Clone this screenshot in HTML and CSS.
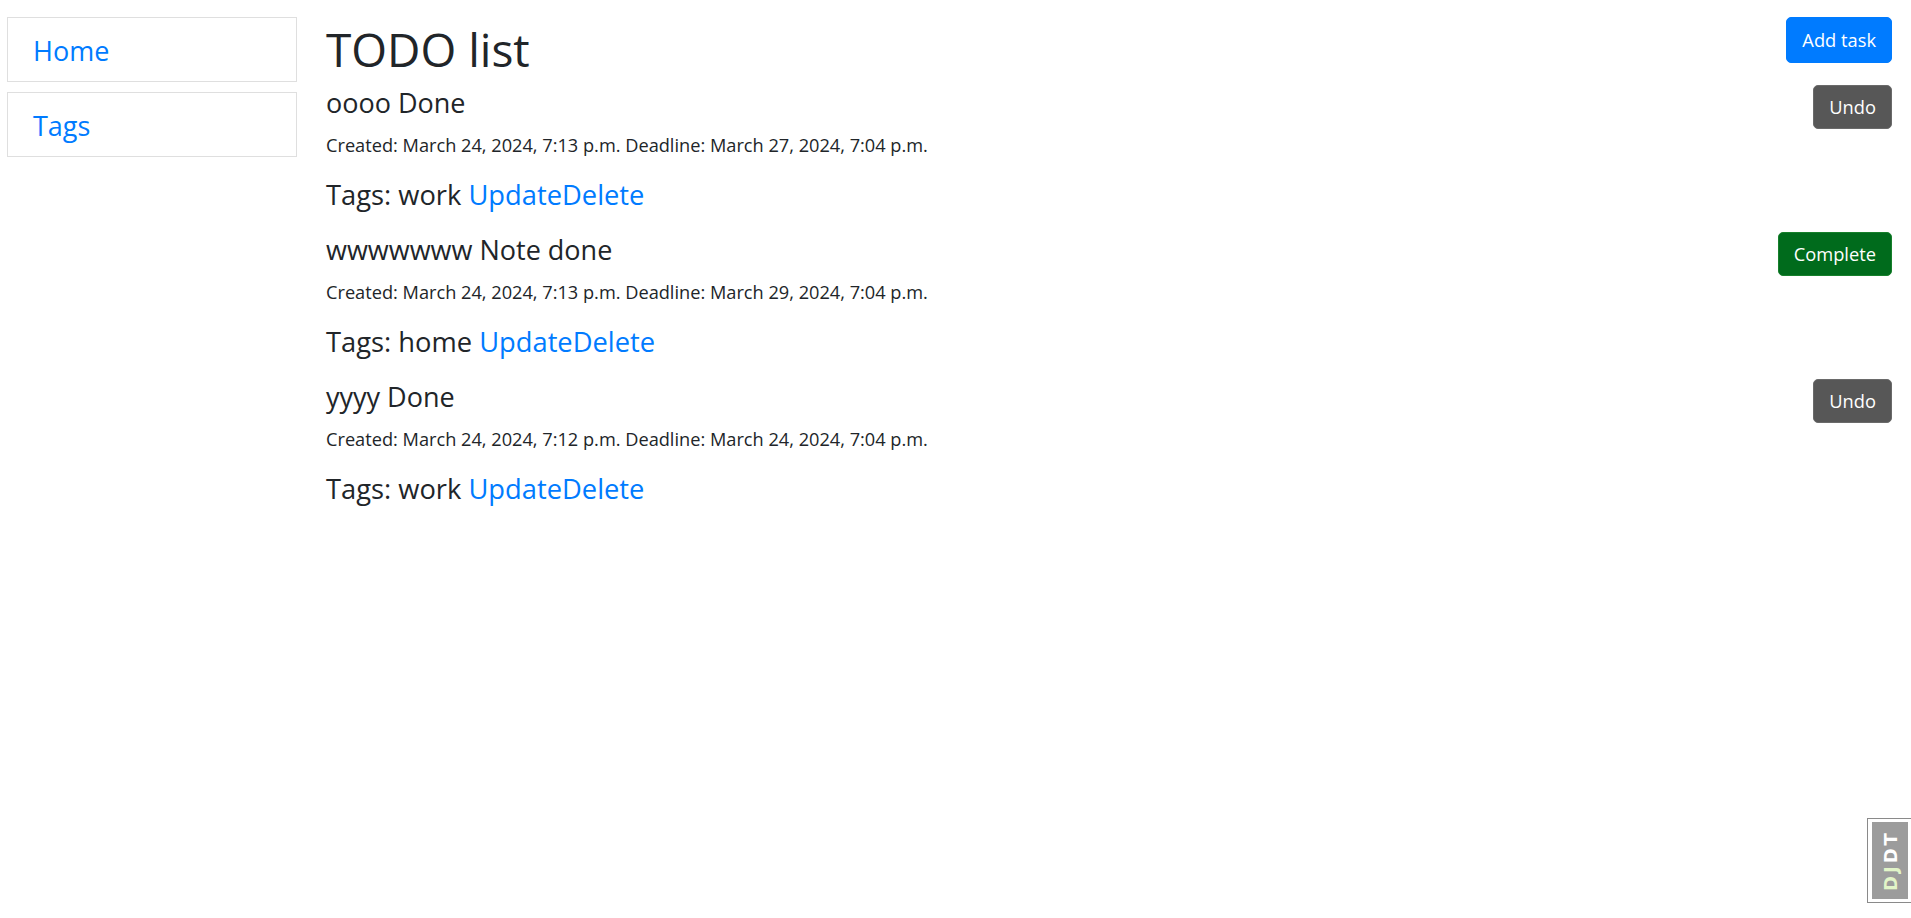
FILE: index.html
```html
<!DOCTYPE html>
<html lang="en">
<head>
<meta charset="utf-8">
<title>TODO list</title>
<link rel="stylesheet" href="styles.css">
</head>
<body>
<div class="layout">
  <aside class="sidebar">
    <a class="nav-item" href="#">Home</a>
    <a class="nav-item" href="#">Tags</a>
  </aside>
  <main class="content">
    <div class="header">
      <h1 class="page-title">TODO list</h1>
      <a class="btn btn-primary" href="#">Add task</a>
    </div>

    <div class="task">
      <div class="task-head">
        <h5 class="task-title">oooo Done</h5>
        <button class="btn btn-undo">Undo</button>
      </div>
      <p class="task-meta">Created: March 24, 2024, 7:13 p.m. Deadline: March 27, 2024, 7:04 p.m.</p>
      <h4 class="task-tags">Tags: work <a href="#">Update</a><a href="#">Delete</a></h4>
    </div>

    <div class="task">
      <div class="task-head">
        <h5 class="task-title">wwwwwww Note done</h5>
        <button class="btn btn-complete">Complete</button>
      </div>
      <p class="task-meta">Created: March 24, 2024, 7:13 p.m. Deadline: March 29, 2024, 7:04 p.m.</p>
      <h4 class="task-tags">Tags: home <a href="#">Update</a><a href="#">Delete</a></h4>
    </div>

    <div class="task">
      <div class="task-head">
        <h5 class="task-title">yyyy Done</h5>
        <button class="btn btn-undo">Undo</button>
      </div>
      <p class="task-meta">Created: March 24, 2024, 7:12 p.m. Deadline: March 24, 2024, 7:04 p.m.</p>
      <h4 class="task-tags">Tags: work <a href="#">Update</a><a href="#">Delete</a></h4>
    </div>
  </main>
</div>

<div class="djdt-handle">
  <div class="djdt-button"><span class="djdt-d">D</span><span class="djdt-j">J</span>DT</div>
</div>
</body>
</html>
```

FILE: styles.css
```css
* { box-sizing: border-box; }

html, body {
  margin: 0;
  padding: 0;
  background: #fff;
}

body {
  font-family: "Open Sans", "Noto Sans", "Liberation Sans", sans-serif;
  color: #212529;
}

a { color: #007bff; text-decoration: none; }

.layout {
  display: flex;
  align-items: flex-start;
  padding: 17px 19px 0 7px;
  gap: 29px;
}

.sidebar {
  width: 290px;
  flex: none;
  display: flex;
  flex-direction: column;
  gap: 10px;
}

.nav-item {
  display: block;
  height: 65px;
  border: 1px solid #dfdfdf;
  padding: 3px 0 0 25px;
  font-size: 27px;
  line-height: 60px;
}

.content {
  flex: 1;
  min-width: 0;
}

.header {
  display: flex;
  justify-content: space-between;
  align-items: flex-start;
  margin-bottom: 4px;
}

.page-title {
  margin: 0;
  font-size: 46px;
  font-weight: 400;
  line-height: 64px;
}

.btn {
  display: inline-block;
  font-family: inherit;
  font-size: 18.3px;
  line-height: 28px;
  padding: 7px 15px;
  border: 1px solid transparent;
  border-radius: 5px;
  color: #fff;
  cursor: pointer;
}

.btn-primary {
  background: #007bff;
  border-color: #007bff;
  line-height: 30px;
}

.btn-undo {
  background: #575757;
  border-color: #6a6a6a;
}

.btn-complete {
  background: #006b1c;
  border-color: #17802c;
}

.task {
  margin-bottom: 15px;
}

.task-head {
  display: flex;
  justify-content: space-between;
  align-items: flex-start;
  height: 44px;
}

.task-title {
  margin: 0;
  font-size: 27px;
  font-weight: 400;
  line-height: 35px;
}

.task-meta {
  margin: 0;
  font-size: 18.2px;
  line-height: 32px;
}

.task-tags {
  margin: 12px 0 0;
  font-size: 27.3px;
  font-weight: 400;
  line-height: 44px;
}

.djdt-handle {
  position: fixed;
  right: 0;
  bottom: 15px;
  width: 44px;
  height: 85px;
  background: #fff;
  border: 1px solid #8a8a8a;
  border-right: 0;
  padding: 3px 3px 3px 4px;
}

.djdt-button {
  width: 100%;
  height: 100%;
  background: #9c9c9c;
  color: #fff;
  font-family: "DejaVu Sans", sans-serif;
  font-weight: bold;
  font-size: 18px;
  letter-spacing: 3px;
  line-height: 37px;
  writing-mode: vertical-rl;
  transform: rotate(180deg);
  text-align: center;
}

.djdt-d { color: #e2f5c8; }
.djdt-j { color: #e2f5c8; }
```
